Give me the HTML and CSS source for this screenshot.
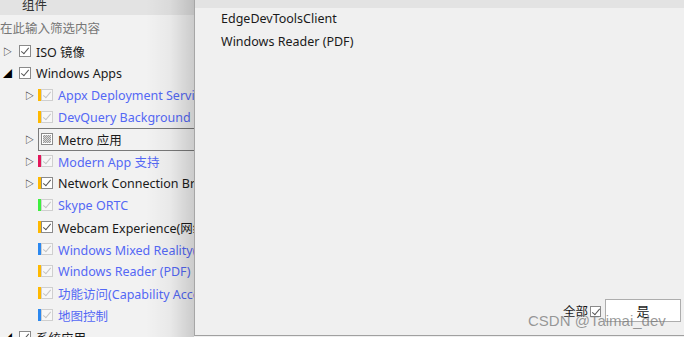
FILE: index.html
```html
<!DOCTYPE html>
<html lang="zh-CN">
<head>
    <meta charset="UTF-8">
    <title>组件</title>
    <link rel="stylesheet" href="styles.css">
</head>
<body>
    <div class="window">
        <div class="left">
            <div class="head">组件</div>
            <div class="filter">在此输入筛选内容</div>
            <div class="tree">
                <div class="row lv0"><span class="exp">&#9655;</span><span class="cb on"></span><span class="txt">ISO 镜像</span></div>
                <div class="row lv0"><span class="exp">&#9698;</span><span class="cb on"></span><span class="txt">Windows Apps</span></div>
                <div class="row lv1"><span class="exp">&#9655;</span><span class="bar orange"></span><span class="cb dim"></span><span class="txt blue">Appx Deployment Service</span></div>
                <div class="row lv1"><span class="exp"></span><span class="bar orange"></span><span class="cb dim"></span><span class="txt blue">DevQuery Background Discovery</span></div>
                <div class="row lv1 focus"><span class="exp">&#9655;</span><span class="bar"></span><span class="cb part"></span><span class="txt">Metro 应用</span></div>
                <div class="row lv1"><span class="exp">&#9655;</span><span class="bar pink"></span><span class="cb dim"></span><span class="txt blue">Modern App 支持</span></div>
                <div class="row lv1"><span class="exp">&#9655;</span><span class="bar orange"></span><span class="cb on"></span><span class="txt">Network Connection Broker</span></div>
                <div class="row lv1"><span class="exp"></span><span class="bar green"></span><span class="cb dim"></span><span class="txt blue">Skype ORTC</span></div>
                <div class="row lv1"><span class="exp"></span><span class="bar orange"></span><span class="cb on"></span><span class="txt">Webcam Experience(网络摄像头)</span></div>
                <div class="row lv1"><span class="exp"></span><span class="bar sky"></span><span class="cb dim"></span><span class="txt blue">Windows Mixed Reality(混合现实)</span></div>
                <div class="row lv1"><span class="exp"></span><span class="bar orange"></span><span class="cb dim"></span><span class="txt blue">Windows Reader (PDF)</span></div>
                <div class="row lv1"><span class="exp"></span><span class="bar orange"></span><span class="cb dim"></span><span class="txt blue">功能访问(Capability Access)</span></div>
                <div class="row lv1"><span class="exp"></span><span class="bar sky"></span><span class="cb dim"></span><span class="txt blue">地图控制</span></div>
                <div class="row lv0"><span class="exp">&#9698;</span><span class="cb on"></span><span class="txt">系统应用</span></div>
            </div>
        </div>
        <div class="right">
            <div class="topbar"></div>
            <div class="list">
                <div class="item">EdgeDevToolsClient</div>
                <div class="item">Windows Reader (PDF)</div>
            </div>
            <div class="foot">
                <span class="all">全部</span>
                <span class="cb on small"></span>
                <button class="btn">是</button>
                <button class="btn cut"></button>
            </div>
        </div>
        <div class="mark">CSDN @Taimai_dev</div>
    </div>
</body>
</html>
```

FILE: styles.css
```css
* {
    margin: 0;
    padding: 0;
    box-sizing: border-box;
}

body {
    width: 684px;
    height: 337px;
    overflow: hidden;
    background: #f0f0f0;
    font-family: "Noto Sans", "Noto Sans CJK SC", sans-serif;
    font-size: 12.5px;
    color: #1a1a1a;
}

.window {
    position: relative;
    display: flex;
    height: 337px;
}

.left {
    position: relative;
    width: 194px;
    flex-shrink: 0;
    overflow: hidden;
    background: #f2f2f2;
}

.left::after {
    content: "";
    position: absolute;
    top: 0;
    right: 0;
    width: 48px;
    height: 100%;
    background: linear-gradient(to right, rgba(0, 0, 0, 0), rgba(0, 0, 0, 0.04) 50%, rgba(0, 0, 0, 0.16));
}

.head {
    height: 15px;
    line-height: 11px;
    padding-left: 22px;
    background: #e3e3e3;
    color: #333;
}

.filter {
    height: 25px;
    line-height: 28px;
    color: #777;
    white-space: nowrap;
}

.row {
    position: relative;
    display: flex;
    align-items: center;
    height: 22px;
    white-space: nowrap;
}

.lv0 {
    padding-left: 3px;
}

.lv1 {
    padding-left: 25px;
}

.exp {
    width: 13px;
    font-size: 9px;
    color: #000;
    flex-shrink: 0;
}

.lv0 .exp {
    width: 16px;
}

.bar {
    width: 3px;
    height: 12px;
    flex-shrink: 0;
}

.orange { background: #ffb900; }
.pink { background: #e3165b; }
.green { background: #3ef03e; }
.sky { background: #2b88f0; }

.cb {
    position: relative;
    width: 12px;
    height: 12px;
    border: 1px solid #8a8a8a;
    background: #fff;
    flex-shrink: 0;
}

.cb.on::after,
.cb.dim::after {
    content: "";
    position: absolute;
    left: 3px;
    top: 0px;
    width: 3px;
    height: 7px;
    border: solid #555;
    border-width: 0 1.3px 1.3px 0;
    transform: rotate(40deg);
}

.cb.dim {
    border-color: #cfcfcf;
    background: #f7f7f7;
}

.cb.dim::after {
    border-color: #c4c4c4;
}

.cb.part::after {
    content: "";
    position: absolute;
    left: 1px;
    top: 1px;
    width: 8px;
    height: 8px;
    background: repeating-conic-gradient(#9a9a9a 0 25%, #d8d8d8 0 50%) 0 0 / 2px 2px;
}

.txt {
    margin-left: 5px;
}

.blue {
    color: #5468f5;
}

.focus::before {
    content: "";
    position: absolute;
    left: 38px;
    top: 0;
    width: 170px;
    height: 21px;
    border: 1px solid #7a7a7a;
}

.right {
    flex: 1;
    display: flex;
    flex-direction: column;
    border-left: 1px solid #a6a6a6;
    border-bottom: 1px solid #a0a0a0;
    height: 336px;
    background: #f0f0f0;
}

.topbar {
    height: 8px;
    background: #e3e3e3;
}

.list {
    flex: 1;
    padding: 0 0 0 26px;
}

.item {
    height: 23px;
    line-height: 22px;
}

.foot {
    display: flex;
    align-items: center;
    justify-content: flex-end;
    height: 22px;
    margin-bottom: 14px;
    margin-right: -9px;
}

.all {
    margin-right: 2px;
}

.small {
    width: 11px;
    height: 11px;
    margin-top: 2px;
}

.btn {
    width: 76px;
    height: 23px;
    margin-left: 4px;
    border: 1px solid #adadad;
    background: #fff;
    font-family: "Noto Sans CJK SC", sans-serif;
    font-size: 13px;
    color: #1a1a1a;
}

.btn.cut {
    width: 8px;
}

.mark {
    position: absolute;
    left: 528px;
    top: 312px;
    font-family: "Liberation Sans", sans-serif;
    font-size: 15px;
    color: rgba(120, 120, 120, 0.75);
}
```
